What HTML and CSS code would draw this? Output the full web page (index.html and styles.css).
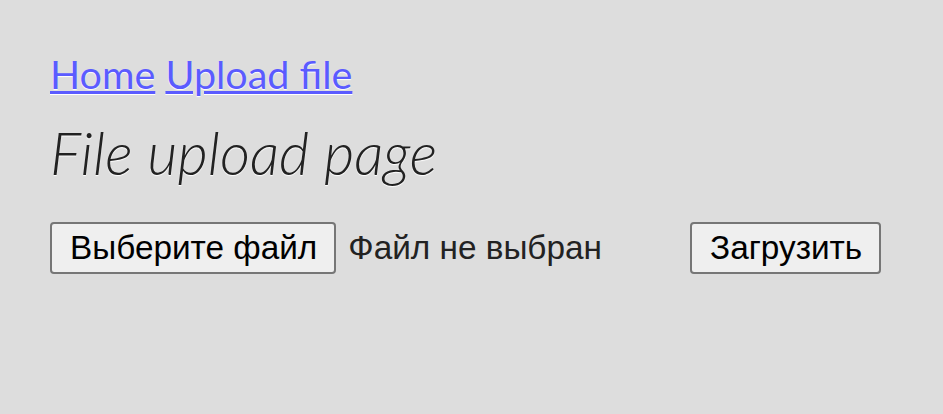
FILE: index.html
```html
<!DOCTYPE html>
<html lang="ru">
<head>
<meta charset="utf-8">
<title>File upload page</title>
<link rel="stylesheet" href="styles.css">
</head>
<body>
<div class="page">
  <nav class="nav"><a href="#">Home</a> <a href="#">Upload file</a></nav>
  <h1 class="title">File upload page</h1>
  <form class="upload">
    <div class="file-field">
      <button type="button" class="btn">Выберите файл</button>
      <span class="file-name">Файл не выбран</span>
    </div>
    <button type="submit" class="btn">Загрузить</button>
  </form>
</div>
</body>
</html>
```
FILE: styles.css
```css
html, body {
  margin: 0;
  padding: 0;
  background: #dddddd;
}
body {
  font-family: Lato, "Noto Sans", sans-serif;
  color: #222222;
  text-shadow: 0 1px 1px #ffffff;
}
.page {
  padding: 50px 50px;
}
.nav {
  font-size: 39.5px;
  line-height: 48px;
}
.nav a {
  color: #5b5bff;
  text-decoration: underline;
}
.title {
  margin: 18px 0 0;
  font-size: 58.5px;
  font-weight: 300;
  font-style: italic;
  line-height: 72px;
}
.upload {
  display: flex;
  align-items: center;
  margin-top: 34px;
}
.file-field {
  display: flex;
  align-items: center;
  gap: 12px;
  width: 640px;
}
.btn {
  font-family: "Liberation Sans", Arial, sans-serif;
  font-size: 33.33px;
  color: #000000;
  background: #efefef;
  border: 2px solid #767676;
  border-radius: 4px;
  height: 52px;
  padding: 0 17px 0 18px;
  text-shadow: none;
}
.file-name {
  font-family: "Liberation Sans", Arial, sans-serif;
  font-size: 33.33px;
  color: #222222;
  text-shadow: none;
}
```
